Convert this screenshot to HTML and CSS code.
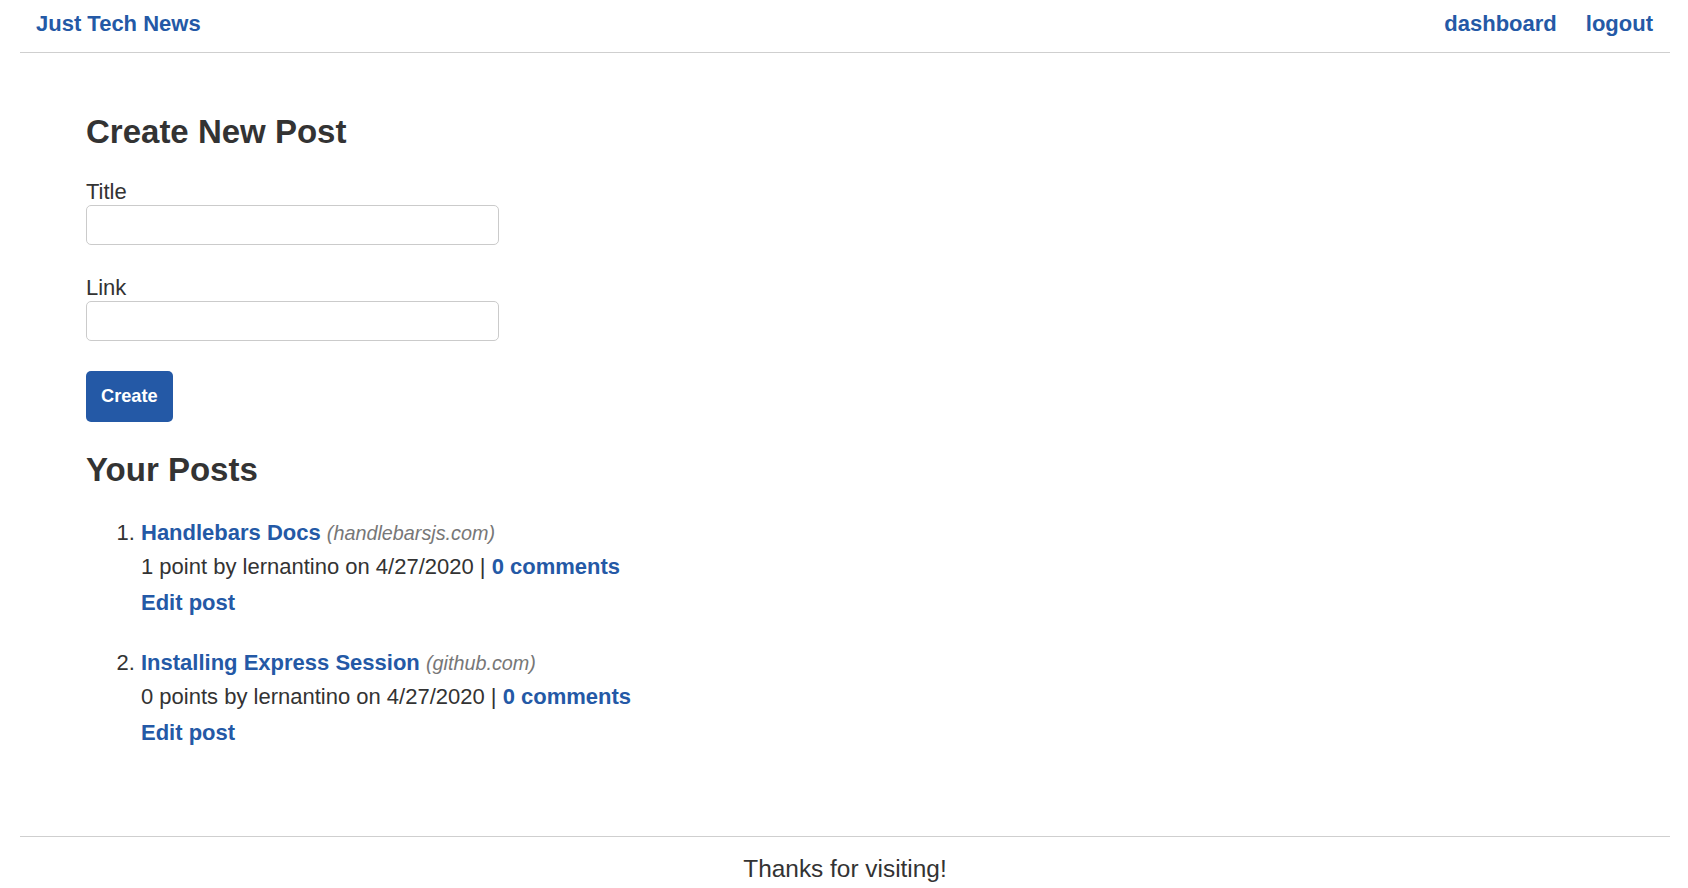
FILE: index.html
```html
<!DOCTYPE html>
<html lang="en">
<head>
<meta charset="utf-8">
<title>Just Tech News</title>
<link rel="stylesheet" href="styles.css">
</head>
<body>
<header class="site-header">
  <a class="brand" href="#">Just Tech News</a>
  <nav class="nav">
    <a href="#">dashboard</a>
    <a href="#">logout</a>
  </nav>
</header>
<main class="main">
  <h2 class="heading">Create New Post</h2>
  <form class="post-form">
    <div class="field">
      <label for="post-title">Title</label>
      <input id="post-title" type="text">
    </div>
    <div class="field">
      <label for="post-url">Link</label>
      <input id="post-url" type="text">
    </div>
    <button class="btn" type="button">Create</button>
  </form>
  <h2 class="heading posts-heading">Your Posts</h2>
  <ol class="post-list">
    <li class="post">
      <div class="post-title"><a href="#">Handlebars Docs</a> <span class="domain">(handlebarsjs.com)</span></div>
      <div class="post-meta">1 point by lernantino on 4/27/2020 | <a href="#">0 comments</a></div>
      <div class="post-edit"><a href="#">Edit post</a></div>
    </li>
    <li class="post">
      <div class="post-title"><a href="#">Installing Express Session</a> <span class="domain">(github.com)</span></div>
      <div class="post-meta">0 points by lernantino on 4/27/2020 | <a href="#">0 comments</a></div>
      <div class="post-edit"><a href="#">Edit post</a></div>
    </li>
  </ol>
</main>
<footer class="site-footer">Thanks for visiting!</footer>
</body>
</html>
```
FILE: styles.css
```css
* { box-sizing: border-box; }

html, body {
  margin: 0;
  padding: 0;
}

body {
  font-family: "Liberation Sans", Arial, sans-serif;
  font-size: 22px;
  color: #333;
  background: #fff;
  min-height: 100vh;
  display: flex;
  flex-direction: column;
}

a {
  color: #2459a6;
  text-decoration: none;
  font-weight: bold;
}

.site-header {
  display: flex;
  justify-content: space-between;
  align-items: center;
  margin: 0 18px 0 20px;
  padding: 11px 17px 15px 16px;
  border-bottom: 1px solid #cfcfcf;
  line-height: 26px;
}

.brand {
  font-size: 22px;
}

.nav {
  display: flex;
  gap: 29px;
}

.nav a {
  font-size: 22px;
}

.main {
  flex: 1;
  padding: 59px 0 0 86px;
}

.heading {
  margin: 0;
  font-size: 33px;
  line-height: 39px;
  font-weight: bold;
  color: #333;
}

.post-form {
  margin-top: 28px;
}

.field {
  margin-bottom: 30px;
}

.field label {
  display: block;
  line-height: 25px;
  margin-bottom: 1px;
}

.field input {
  display: block;
  width: 413px;
  height: 40px;
  border: 1px solid #cbcbcb;
  border-radius: 5px;
  padding: 0 10px;
  font-family: inherit;
  font-size: 18px;
  background: #fff;
}

.btn {
  display: block;
  height: 51px;
  padding: 0 15px;
  border: none;
  border-radius: 5px;
  background: #2459a6;
  color: #fff;
  font-family: "Liberation Sans", Arial, sans-serif;
  font-size: 18.2px;
  font-weight: bold;
}

.posts-heading {
  margin-top: 28px;
}

.post-list {
  margin: 27px 0 0;
  padding-left: 55px;
}

.post {
  margin-bottom: 27px;
}

.post-title,
.post-meta {
  line-height: 33px;
}

.post-edit {
  line-height: 33px;
  margin-top: 3px;
}

.domain {
  font-style: italic;
  font-size: 19.8px;
  color: #777;
}

.site-footer {
  margin: 0 18px 0 20px;
  padding: 18px 0 5px;
  border-top: 1px solid #cfcfcf;
  text-align: center;
  font-size: 24.4px;
  line-height: 27.6px;
  color: #333;
}
```
